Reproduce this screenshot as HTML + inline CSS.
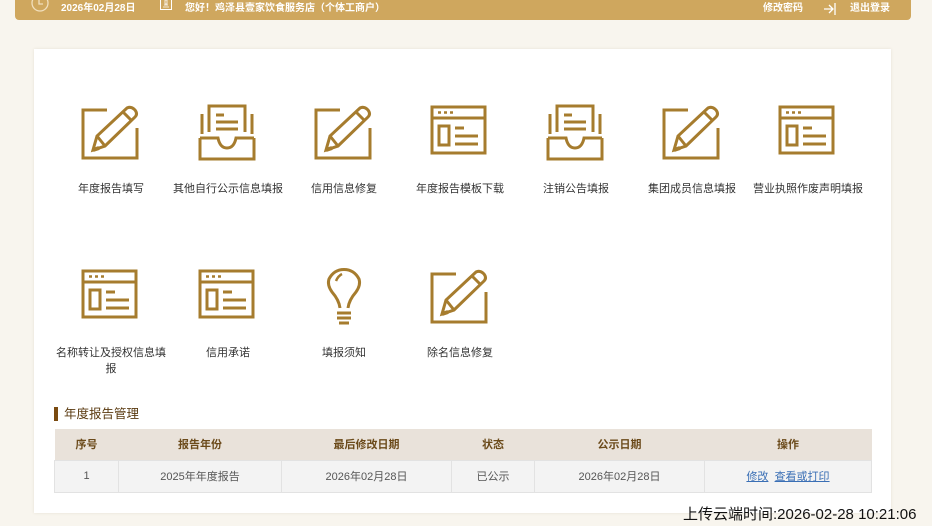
<!DOCTYPE html>
<html><head><meta charset="utf-8"><style>
*{margin:0;padding:0;box-sizing:border-box}
body{width:932px;height:526px;overflow:hidden;background:#f8f5ee;font-family:"Liberation Sans","Noto Sans CJK SC",sans-serif;position:relative}
.top{position:absolute;left:15px;top:-10px;width:896px;height:30px;background:#cfa75e;border-radius:4px;color:#fff;font-size:10px}
.top span{position:absolute;top:9px;white-space:nowrap}
.card{position:absolute;left:34px;top:49px;width:857px;height:464px;background:#fff;box-shadow:0 0 3px #e6e1d6}
.it{position:absolute;width:116px;text-align:center;font-size:11px;color:#333;line-height:16px}
.it svg{display:block;margin:0 auto 20px}
.h{position:absolute;left:54px;top:407px;font-size:12.5px;color:#5a3a10;border-left:4px solid #7a4a10;padding-left:6px;line-height:14px}
table{position:absolute;left:54px;top:429px;width:818px;border-collapse:collapse;font-size:11px;text-align:center}
th{background:#e9e2da;color:#6b4a1a;height:31px;font-weight:bold}
td{background:#f3f3f3;color:#555;height:32px;border:1px solid #e2e2e2}
a{color:#3a6fb5;text-decoration:underline}
.up{position:absolute;left:683px;top:503px;font-size:15px;color:#111;white-space:nowrap}
</style></head><body>
<div class="top">
<svg style="position:absolute;left:16px;top:4px" width="18" height="18"><circle cx="9" cy="9" r="8" fill="none" stroke="#f1dfbd" stroke-width="1.3"/><path d="M8 4V10H12" fill="none" stroke="#f1dfbd" stroke-width="1.3"/></svg>
<span style="left:46px;font-weight:bold">2026年02月28日</span>
<svg style="position:absolute;left:145px;top:8px" width="12" height="12"><rect x="0.5" y="0.5" width="11" height="11" fill="none" stroke="#fff"/><path d="M3 9H9M4 7H8M5 2H7V6H5Z" fill="none" stroke="#fff" stroke-width="0.8"/></svg>
<span style="left:170px;font-weight:bold">您好！鸡泽县壹家饮食服务店（个体工商户）</span>
<span style="left:748px;font-weight:bold">修改密码</span>
<svg style="position:absolute;left:808px;top:12px" width="16" height="14"><path d="M1 7H10M6 3L10 7L6 11M12 1V13" fill="none" stroke="#fff" stroke-width="1.3"/></svg>
<span style="left:835px;font-weight:bold">退出登录</span>
</div>
<div class="card"></div>
<svg width="0" height="0" style="position:absolute"><defs>
<g id="pen" fill="none" stroke="#a67c2e" stroke-width="3"><path d="M26 6H2V54H56V24"/><path d="M12 46L16 32L46 4Q50 2 54 6Q57 10 54 13L24 42Z"/><path d="M16 32L24 42M42 8L50 16"/><path d="M12 46L18 44" stroke-width="4"/></g>
<g id="box" fill="none" stroke="#a67c2e" stroke-width="3"><path d="M2 34V55H56V34"/><path d="M2 34H20Q22 44 29 44Q36 44 38 34H56"/><path d="M4 30V10M54 30V10"/><path d="M11 28V2H47V28"/><path d="M18 11H26M18 18H40M18 25H40"/></g>
<g id="web" fill="none" stroke="#a67c2e" stroke-width="3"><rect x="2" y="3" width="53" height="11"/><path d="M2 14V49H55V14"/><rect x="9" y="22" width="10" height="19"/><path d="M25 24H34M25 32H48M25 40H48"/><path d="M8 8.5H11M14 8.5H17M20 8.5H23" stroke-width="2.5"/></g>
<g id="bulb" fill="none" stroke="#a67c2e" stroke-width="3"><path d="M14 40Q13 32 6 24Q1 17 3 11Q8 1.5 18 1.5Q28 1.5 33 11Q35 17 30 24Q23 32 22 40"/><path d="M10 13Q12 8 16 6" stroke-width="2.5"/><path d="M11 45H25M11 50H25M13 55H23"/></g>
</defs></svg>
<div class="it" style="left:53px;top:104px"><svg width="60" height="57"><use href="#pen"/></svg>年度报告填写</div>
<div class="it" style="left:170px;top:104px"><svg width="60" height="57"><use href="#box"/></svg>其他自行公示信息填报</div>
<div class="it" style="left:286px;top:104px"><svg width="60" height="57"><use href="#pen"/></svg>信用信息修复</div>
<div class="it" style="left:402px;top:104px"><svg width="60" height="57"><use href="#web"/></svg>年度报告模板下载</div>
<div class="it" style="left:518px;top:104px"><svg width="60" height="57"><use href="#box"/></svg>注销公告填报</div>
<div class="it" style="left:634px;top:104px"><svg width="60" height="57"><use href="#pen"/></svg>集团成员信息填报</div>
<div class="it" style="left:750px;top:104px"><svg width="60" height="57"><use href="#web"/></svg>营业执照作废声明填报</div>
<div class="it" style="left:53px;top:268px"><svg width="60" height="57"><use href="#web"/></svg>名称转让及授权信息填<br>报</div>
<div class="it" style="left:170px;top:268px"><svg width="60" height="57"><use href="#web"/></svg>信用承诺</div>
<div class="it" style="left:286px;top:268px"><svg width="60" height="57"><g transform="translate(12,0)"><use href="#bulb"/></g></svg>填报须知</div>
<div class="it" style="left:402px;top:268px"><svg width="60" height="57"><use href="#pen"/></svg>除名信息修复</div>
<div class="h">年度报告管理</div>
<table><tr><th style="width:64px">序号</th><th style="width:163px">报告年份</th><th style="width:170px">最后修改日期</th><th style="width:83px">状态</th><th style="width:170px">公示日期</th><th>操作</th></tr>
<tr><td>1</td><td>2025年年度报告</td><td>2026年02月28日</td><td>已公示</td><td>2026年02月28日</td><td><a>修改</a>&nbsp; <a>查看或打印</a></td></tr></table>
<div class="up">上传云端时间:2026-02-28 10:21:06</div>
</body></html>
